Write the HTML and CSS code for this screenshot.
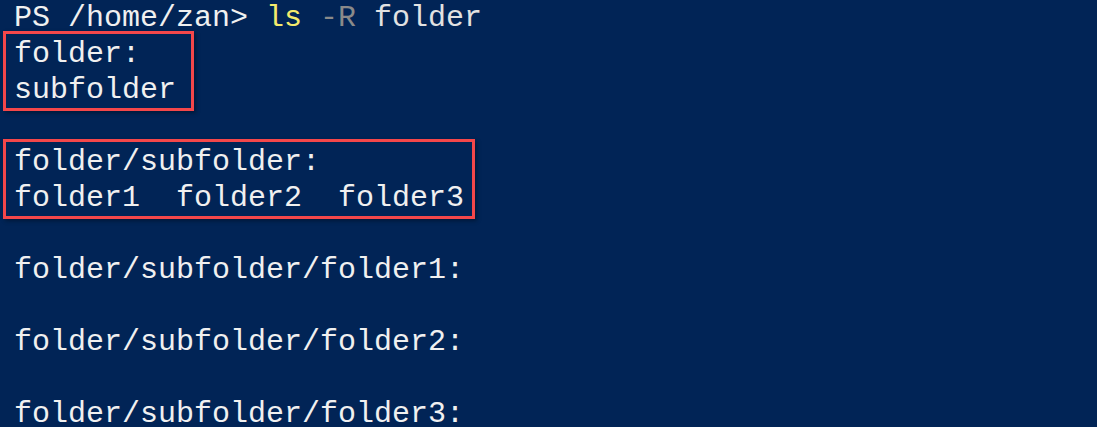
FILE: index.html
```html
<!DOCTYPE html>
<html>
<head>
<meta charset="utf-8">
<link rel="stylesheet" href="styles.css">
</head>
<body>
<div class="term">
  <div class="line"><span class="prompt">PS /home/zan&gt; </span><span class="cmd">ls</span> <span class="param">-R</span> <span class="arg">folder</span></div>
  <div class="box box-a">
    <div class="line">folder:</div>
    <div class="line">subfolder</div>
  </div>
  <div class="line"></div>
  <div class="box box-b">
    <div class="line">folder/subfolder:</div>
    <div class="line">folder1  folder2  folder3</div>
  </div>
  <div class="line"></div>
  <div class="line">folder/subfolder/folder1:</div>
  <div class="line"></div>
  <div class="line">folder/subfolder/folder2:</div>
  <div class="line"></div>
  <div class="line">folder/subfolder/folder3:</div>
</div>
</body>
</html>
```
FILE: styles.css
```css
html, body {
  margin: 0;
  padding: 0;
  background: #012456;
  height: 100%;
  overflow: hidden;
}
.term {
  padding-left: 14px;
  font-family: "Liberation Mono", "Courier New", monospace;
  font-size: 30px;
  line-height: 36px;
  color: #f0f0f0;
}
.line {
  height: 36px;
  white-space: pre;
}
.prompt { color: #f0f0f0; }
.cmd { color: #f4ea6c; }
.param { color: #8a8a8a; }
.arg { color: #e2e2e2; }
.box {
  display: inline-block;
  vertical-align: top;
  border: 3px solid #f4474a;
  box-shadow: 2px 2px 4px rgba(0, 0, 0, 0.35);
  margin: -5px 0 -3px -11px;
  padding: 2px 0 0 8px;
}
.box-a { padding-right: 15px; }
.box-b { padding-right: 8px; }
```
